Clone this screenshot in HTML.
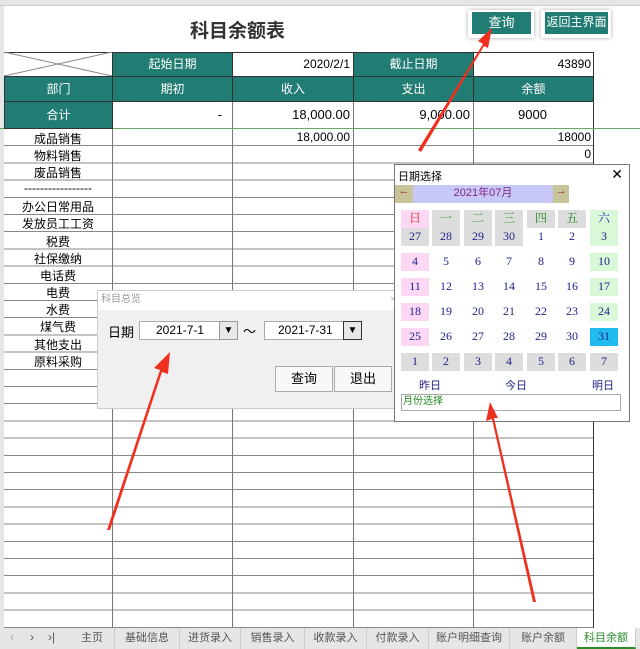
<!DOCTYPE html><html><head><meta charset="utf-8"><style>
*{margin:0;padding:0;box-sizing:border-box}
body{width:640px;height:649px;overflow:hidden;background:#fff;position:relative;font-family:"Liberation Sans","Noto Sans CJK SC",sans-serif;font-size:12px;color:#000}
.a{position:absolute}
.t{position:absolute;background:#217d73;color:#fff;text-align:center;border:1px solid #333}
.c{position:absolute;text-align:center;width:108px;left:4px;font-size:12px}
.r{position:absolute;text-align:right}
.cal div{position:absolute;width:28px;height:18px;text-align:center;font-family:"Liberation Serif","Noto Serif CJK SC",serif;font-size:12px;color:#22228a;line-height:17px}
.tab{position:absolute;top:628px;height:21px;line-height:20px;text-align:center;color:#555;font-size:11px;border-right:1px solid #ccc}
</style></head><body>
<div class="a" style="left:0;top:0;width:640px;height:6px;background:#e6e6e6;border-bottom:1px solid #ccc"></div>
<div class="a" style="left:0;top:6px;width:4px;height:622px;background:#e6e6e6"></div>
<!-- grid rows -->
<div class="a" style="left:4px;top:128px;width:589px;height:500px;background:repeating-linear-gradient(to bottom,#888 0,#888 1px,transparent 1px,transparent 17.2px)"></div>
<div class="a" style="left:112px;top:52px;width:1px;height:576px;background:#777"></div>
<div class="a" style="left:232px;top:52px;width:1px;height:576px;background:#777"></div>
<div class="a" style="left:353px;top:52px;width:1px;height:576px;background:#777"></div>
<div class="a" style="left:473px;top:52px;width:1px;height:576px;background:#777"></div>
<div class="a" style="left:593px;top:52px;width:1px;height:576px;background:#333"></div>
<div class="a" style="left:4px;top:52px;width:590px;height:1px;background:#333"></div>
<div class="a" style="left:4px;top:76px;width:590px;height:1px;background:#333"></div>
<div class="a" style="left:4px;top:101px;width:590px;height:1px;background:#333"></div>
<div class="a" style="left:0;top:128px;width:640px;height:1px;background:#6a6"></div>
<div class="a" style="left:190px;top:16px;font-size:19px;font-weight:bold;color:#333">科目余额表</div>
<div class="a" style="left:468px;top:10px;width:66px;height:28px;background:#fff;box-shadow:0 0 4px #aaa"></div>
<div class="a" style="left:472px;top:12px;width:59px;height:22px;background:#217d73;color:#fff;text-align:center;line-height:21px;font-size:13px">查询</div>
<div class="a" style="left:541px;top:10px;width:70px;height:28px;background:#fff;box-shadow:0 0 4px #aaa"></div>
<div class="a" style="left:545px;top:12px;width:63px;height:22px;background:#217d73;color:#fff;text-align:center;line-height:21px;font-size:12px">返回主界面</div>
<svg class="a" style="left:4px;top:52px" width="108" height="24"><line x1="0" y1="0" x2="108" y2="24" stroke="#888"/><line x1="0" y1="24" x2="108" y2="0" stroke="#888"/></svg>
<div class="t" style="left:112px;top:52px;width:121px;height:25px;line-height:23px">起始日期</div>
<div class="r" style="left:233px;top:57px;width:117px">2020/2/1</div>
<div class="t" style="left:353px;top:52px;width:121px;height:25px;line-height:23px">截止日期</div>
<div class="r" style="left:474px;top:57px;width:117px">43890</div>
<div class="t" style="left:4px;top:76px;width:109px;height:26px;line-height:24px">部门</div>
<div class="t" style="left:112px;top:76px;width:121px;height:26px;line-height:24px">期初</div>
<div class="t" style="left:232px;top:76px;width:122px;height:26px;line-height:24px">收入</div>
<div class="t" style="left:353px;top:76px;width:121px;height:26px;line-height:24px">支出</div>
<div class="t" style="left:473px;top:76px;width:121px;height:26px;line-height:24px">余额</div>
<div class="t" style="left:4px;top:101px;width:109px;height:28px;line-height:26px">合计</div>
<div class="r" style="left:112px;top:107px;width:110px;font-size:13px">-</div>
<div class="r" style="left:233px;top:107px;width:117px;font-size:13px">18,000.00</div>
<div class="r" style="left:353px;top:107px;width:117px;font-size:13px">9,000.00</div>
<div class="a" style="left:518px;top:107px;font-size:13px">9000</div>
<div class="r" style="left:233px;top:130px;width:117px">18,000.00</div>
<div class="r" style="left:474px;top:130px;width:117px">18000</div>
<div class="r" style="left:474px;top:147px;width:117px">0</div>
<div class="c" style="top:130px">成品销售</div>
<div class="c" style="top:147px">物料销售</div>
<div class="c" style="top:164px">废品销售</div>
<div class="c" style="top:181px">-----------------</div>
<div class="c" style="top:198px">办公日常用品</div>
<div class="c" style="top:215px">发放员工工资</div>
<div class="c" style="top:233px">税费</div>
<div class="c" style="top:250px">社保缴纳</div>
<div class="c" style="top:267px">电话费</div>
<div class="c" style="top:284px">电费</div>
<div class="c" style="top:301px">水费</div>
<div class="c" style="top:318px">煤气费</div>
<div class="c" style="top:336px">其他支出</div>
<div class="c" style="top:353px">原料采购</div>
<!-- dialog 1 -->
<div class="a" style="left:97px;top:290px;width:303px;height:119px;background:#f0f0f0;border:1px solid #ccc">
<div class="a" style="left:0;top:0;width:301px;height:19px;background:#fff;color:#999;font-size:10px;line-height:18px;padding-left:3px">科目总览<span style="position:absolute;right:3px;color:#bbb">×</span></div>
<div class="a" style="left:10px;top:31px;font-size:13px">日期</div>
<div class="a" style="left:41px;top:30px;width:98px;height:19px;background:#fff;border:1px solid #aaa;font-size:12px;line-height:17px;padding-left:16px">2021-7-1</div>
<div class="a" style="left:121px;top:30px;width:19px;height:19px;background:#e8e8e8;border:1px solid #999;font-size:10px;text-align:center;line-height:17px">▼</div>
<div class="a" style="left:145px;top:30px;font-size:13px">～</div>
<div class="a" style="left:166px;top:30px;width:80px;height:19px;background:#fff;border:1px solid #aaa;font-size:12px;line-height:17px;padding-left:13px">2021-7-31</div>
<div class="a" style="left:245px;top:30px;width:19px;height:19px;background:#e8e8e8;border:1px solid #333;font-size:10px;text-align:center;line-height:17px">▼</div>
<div class="a" style="left:177px;top:75px;width:58px;height:26px;background:#f8f8f8;border:1px solid #aaa;text-align:center;line-height:24px;font-size:13px">查询</div>
<div class="a" style="left:236px;top:75px;width:58px;height:26px;background:#f8f8f8;border:1px solid #aaa;text-align:center;line-height:24px;font-size:13px">退出</div>
</div>
<!-- calendar -->
<div class="a cal" style="left:394px;top:164px;width:236px;height:258px;background:#fff;border:1px solid #777">
<span class="a" style="left:3px;top:3px;font-size:11px">日期选择</span><span class="a" style="right:6px;top:1px;font-size:14px">✕</span>
<span class="a" style="left:0;top:20px;width:18px;height:18px;background:#c8c49a;color:#822;font-size:11px;text-align:center">←</span>
<span class="a" style="left:18px;top:20px;width:140px;height:18px;background:#c8c8f8;color:#822486;font-size:11px;text-align:center;line-height:17px">2021年07月</span>
<span class="a" style="left:158px;top:20px;width:16px;height:18px;background:#c8c49a;color:#822;font-size:11px;text-align:center">→</span>
<div style="left:6px;top:45px;background:#fcd8f4;color:#e22">日</div>
<div style="left:37px;top:45px;background:#ddd;color:#282">一</div>
<div style="left:69px;top:45px;background:#ddd;color:#282">二</div>
<div style="left:100px;top:45px;background:#ddd;color:#282">三</div>
<div style="left:132px;top:45px;background:#ddd;color:#282">四</div>
<div style="left:163px;top:45px;background:#ddd;color:#282">五</div>
<div style="left:195px;top:45px;background:#d8f8d8;color:#22a">六</div>
<div style="left:6px;top:63px;background:#ddd">27</div><div style="left:37px;top:63px;background:#ddd">28</div><div style="left:69px;top:63px;background:#ddd">29</div><div style="left:100px;top:63px;background:#ddd">30</div><div style="left:132px;top:63px">1</div><div style="left:163px;top:63px">2</div><div style="left:195px;top:63px;background:#d8f8d8">3</div>
<div style="left:6px;top:88px;background:#fcd8f4">4</div><div style="left:37px;top:88px">5</div><div style="left:69px;top:88px">6</div><div style="left:100px;top:88px">7</div><div style="left:132px;top:88px">8</div><div style="left:163px;top:88px">9</div><div style="left:195px;top:88px;background:#d8f8d8">10</div>
<div style="left:6px;top:113px;background:#fcd8f4">11</div><div style="left:37px;top:113px">12</div><div style="left:69px;top:113px">13</div><div style="left:100px;top:113px">14</div><div style="left:132px;top:113px">15</div><div style="left:163px;top:113px">16</div><div style="left:195px;top:113px;background:#d8f8d8">17</div>
<div style="left:6px;top:138px;background:#fcd8f4">18</div><div style="left:37px;top:138px">19</div><div style="left:69px;top:138px">20</div><div style="left:100px;top:138px">21</div><div style="left:132px;top:138px">22</div><div style="left:163px;top:138px">23</div><div style="left:195px;top:138px;background:#d8f8d8">24</div>
<div style="left:6px;top:163px;background:#fcd8f4">25</div><div style="left:37px;top:163px">26</div><div style="left:69px;top:163px">27</div><div style="left:100px;top:163px">28</div><div style="left:132px;top:163px">29</div><div style="left:163px;top:163px">30</div><div style="left:195px;top:163px;background:#22bbf0">31</div>
<div style="left:6px;top:188px;background:#ddd">1</div><div style="left:37px;top:188px;background:#ddd">2</div><div style="left:69px;top:188px;background:#ddd">3</div><div style="left:100px;top:188px;background:#ddd">4</div><div style="left:132px;top:188px;background:#ddd">5</div><div style="left:163px;top:188px;background:#ddd">6</div><div style="left:195px;top:188px;background:#ddd">7</div>
<span class="a" style="left:24px;top:212px;color:#22228a;font-size:11px">昨日</span>
<span class="a" style="left:110px;top:212px;color:#22228a;font-size:11px">今日</span>
<span class="a" style="left:197px;top:212px;color:#22228a;font-size:11px">明日</span>
<span class="a" style="left:6px;top:229px;width:220px;height:17px;border:1px solid #aaa;color:#282;font-size:10px;line-height:14px;padding-left:1px">月份选择</span>
</div>
<!-- arrows -->
<svg class="a" style="left:0;top:0" width="640" height="649">
<g fill="#f0301e">
<polygon points="107,530 160,370 154,368 170,352 168,374 162,372 110,530"/>
<polygon points="418,150 483,44 478,41 492,28 488,48 484,46 421,152"/>
<polygon points="533,602 492,419 486,421 490,402 498,418 494,418 536,602"/>
</g></svg>
<!-- tabs -->
<div class="a" style="left:0;top:628px;width:640px;height:21px;background:#e6e6e6"></div>
<div class="a" style="left:10px;top:630px;color:#aaa;font-size:12px">‹</div>
<div class="a" style="left:30px;top:630px;color:#555;font-size:12px">›</div>
<div class="a" style="left:48px;top:630px;color:#555;font-size:12px">›|</div>
<div class="tab" style="left:70px;width:45px">主页</div>
<div class="tab" style="left:115px;width:65px">基础信息</div>
<div class="tab" style="left:180px;width:61px">进货录入</div>
<div class="tab" style="left:241px;width:64px">销售录入</div>
<div class="tab" style="left:305px;width:62px">收款录入</div>
<div class="tab" style="left:367px;width:62px">付款录入</div>
<div class="tab" style="left:429px;width:81px">账户明细查询</div>
<div class="tab" style="left:510px;width:67px">账户余额</div>
<div class="tab" style="left:577px;width:59px;background:#fff;color:#2a8a2a;border-bottom:2px solid #2a8a2a">科目余额</div>
</body></html>
